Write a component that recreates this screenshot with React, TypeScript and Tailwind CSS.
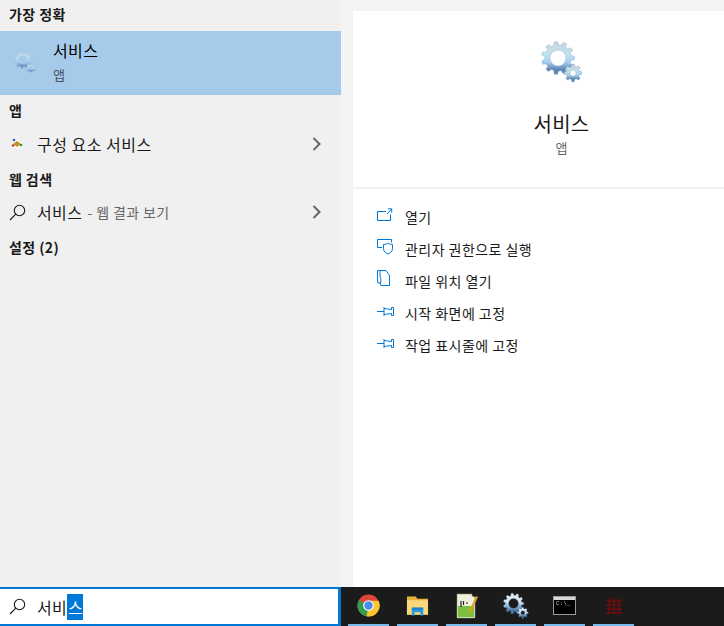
import React from "react";

const FONT = "font-['Noto_Sans_CJK_KR','Noto_Sans',sans-serif]";

function gearPath(cx: number, cy: number, rOuter: number, rInner: number, rHole: number, teeth: number) {
  const pts: string[] = [];
  const step = (Math.PI * 2) / teeth;
  for (let i = 0; i < teeth; i++) {
    const a = i * step;
    const p = (r: number, t: number) => `${(cx + r * Math.cos(a + t * step)).toFixed(2)} ${(cy + r * Math.sin(a + t * step)).toFixed(2)}`;
    pts.push(`${i === 0 ? "M" : "L"}${p(rInner, -0.32)}`, `L${p(rOuter, -0.18)}`, `L${p(rOuter, 0.18)}`, `L${p(rInner, 0.32)}`);
  }
  const hole = `M${cx + rHole} ${cy}A${rHole} ${rHole} 0 1 0 ${cx - rHole} ${cy}A${rHole} ${rHole} 0 1 0 ${cx + rHole} ${cy}Z`;
  return pts.join("") + "Z" + hole;
}

function Gears({ size, id, dark = false, className = "" }: { size: number; id: string; dark?: boolean; className?: string }) {
  return (
    <svg width={size} height={size} viewBox="0 0 42 42" className={`shrink-0 ${className}`}>
      <defs>
        <linearGradient id={id} x1="0" y1="0" x2="0" y2="1">
          <stop offset="0" stopColor={dark ? "#e4edf5" : "#c9d6de"} />
          <stop offset="0.4" stopColor={dark ? "#d2e4f4" : "#bfe2f0"} />
          <stop offset="0.62" stopColor={dark ? "#8fb8e0" : "#a8d0f2"} />
          <stop offset="0.85" stopColor={dark ? "#48709c" : "#5f86b4"} />
        </linearGradient>
      </defs>
      <path d={gearPath(17, 17, 16.5, 13.2, 8, 11)} fill={`url(#${id})`} fillRule="evenodd" stroke="#8ea8bf" strokeWidth="0.4" />
      <path d={gearPath(32, 32, 8.8, 6.6, 3.2, 8)} fill={`url(#${id})`} fillRule="evenodd" stroke="#6b89a8" strokeWidth="0.4" />
    </svg>
  );
}

function SearchIcon({ color = "#1a1a1a" }: { color?: string }) {
  return (
    <svg width="17" height="17" viewBox="0 0 17 17" fill="none" stroke={color} strokeWidth="1.1" className="shrink-0">
      <circle cx="10.5" cy="6.5" r="5.200" />
      <path d="M6.800 10.200 1 16" />
    </svg>
  );
}

function Chevron() {
  return (
    <svg width="9" height="14" viewBox="0 0 9 14" fill="none" stroke="#666" strokeWidth="2" className="shrink-0">
      <path d="M1.500 1 7.500 7l-6 6" />
    </svg>
  );
}

function SectionTitle({ children, className = "" }: { children: React.ReactNode; className?: string }) {
  return <div className={`pl-[9px] text-[14px] font-semibold leading-[18px] tracking-[0.4px] text-[#1a1a1a] ${className}`}>{children}</div>;
}

const blue = "#0078d7";

const OpenIcon = () => (
  <svg width="16" height="14" viewBox="0 0 16 14" fill="none" stroke={blue} strokeWidth="1">
    <path d="M9 3.500H.5v9h13V6.500M10 6l4.500-5M11 .8h3.700v3.700" />
  </svg>
);
const ShieldIcon = () => (
  <svg width="17" height="16" viewBox="0 0 17 16" fill="none" stroke={blue} strokeWidth="1">
    <path d="M5 8.500H.5v-8h14v3" />
    <path d="M6.500 5.500c2 0 3.500-.5 4.500-1.500 1 1 2.500 1.500 4.500 1.500v4c0 3-2 4.500-4.500 5.500-2.500-1-4.500-2.500-4.500-5.500z" />
  </svg>
);
const FolderIcon = () => (
  <svg width="13" height="18" viewBox="0 0 13 18" fill="none" stroke={blue} strokeWidth="1">
    <path d="M.5.500h8.500l3.500 5v10H4l-1-2.500-2.500-.5z" />
    <path d="M3 1v5.500l1 3-.5 4" />
  </svg>
);
const PinIcon = () => (
  <svg width="17" height="11" viewBox="0 0 17 11" fill="none" stroke={blue} strokeWidth="1">
    <path d="M0 5.500h7M7 1v9M7 2.500l7.500 1V1.500h2v8h-2v-2l-7.500 1" />
  </svg>
);

const actions: [React.ReactNode, string][] = [
  [<OpenIcon />, "열기"],
  [<ShieldIcon />, "관리자 권한으로 실행"],
  [<FolderIcon />, "파일 위치 열기"],
  [<PinIcon />, "시작 화면에 고정"],
  [<PinIcon />, "작업 표시줄에 고정"],
];

function TaskItem({ children }: { children: React.ReactNode }) {
  return (
    <div className="relative flex h-full w-[49px] items-center justify-center pb-[2px]">
      <div className="flex items-center justify-center blur-[0.5px]">{children}</div>
      <div className="absolute bottom-0 left-[4px] right-[4px] h-[2px] bg-[#76b9ed]" />
    </div>
  );
}

function Chrome() {
  return (
    <svg width="23" height="23" viewBox="0 0 24 24">
      <circle cx="12" cy="12" r="11.500" fill="#e0453a" />
      <path d="M12 12 2 6.200A11.500 11.500 0 0 0 10 23.300z" fill="#2f9e4f" />
      <path d="M12 12 10 23.300A11.500 11.500 0 0 0 22.500 7H12z" fill="#f9c72f" />
      <circle cx="12" cy="12" r="5.600" fill="#fff" />
      <circle cx="12" cy="12" r="4.400" fill="#4a8cf0" />
    </svg>
  );
}

function Explorer() {
  return (
    <svg width="23" height="22" viewBox="0 0 24 22">
      <path d="M1 1h9l2 2.500h11V20H1z" fill="#e9b43c" />
      <path d="M1 5h22v15H1z" fill="#fbd97a" />
      <path d="M6 14h12v7h-3v-3.500H9V21H6z" fill="#2e9be6" />
      <path d="M6 12.500h12V15H6z" fill="#1f7fc9" />
    </svg>
  );
}

function Notepad() {
  return (
    <svg width="24" height="26" viewBox="0 0 24 26">
      <path d="M2 1h15v2l3 1v21H2z" fill="#eef2dc" stroke="#8a8a6a" strokeWidth="0.6" />
      <path d="M3 13h16v11H3z" fill="#7bc043" />
      <path d="M6 8v6M8.500 8v4M11 10h2" stroke="#222" strokeWidth="1.200" />
      <path d="M14 18 21 3l2 1-7 15-2.500 1.500z" fill="#e8a020" />
    </svg>
  );
}

function Cmd() {
  return (
    <div className="flex h-[19px] w-[23px] flex-col border border-[#9a9a9a] bg-black">
      <div className="h-[3px] bg-[#d8d8d8]" />
      <div className="pl-[2px] font-['Liberation_Mono',monospace] text-[6px] leading-[8px] text-[#d0d0d0]">C:\_</div>
    </div>
  );
}

function RedGrid() {
  return (
    <svg width="16" height="16" viewBox="0 0 16 16" fill="none" stroke="#6d0d0d" strokeWidth="1.500">
      <path d="M0 3h16M0 7h16M0 11h16M0 15h16M3 0v16M8 0v16M13 0v16" />
    </svg>
  );
}

export default function App() {
  return (
    <div className={`flex h-[626px] w-[724px] flex-col overflow-hidden bg-[#f3f3f3] ${FONT}`}>
      <div className="flex min-h-0 flex-1">
        {/* Left results column */}
        <div className="flex w-[341px] shrink-0 flex-col bg-[#f0f0f0]">
          <SectionTitle className="pt-[5px] pb-[8px]">가장 정확</SectionTitle>
          <div className="flex h-[64px] items-center bg-[#a6cbea]">
            <div className="flex w-[53px] items-center justify-center pr-[3px] pb-[3px]">
              <Gears size={22} id="g1" className="opacity-80" />
            </div>
            <div className="flex flex-col pb-[3px]">
              <span className="text-[16px] leading-[22px] tracking-[0.4px] text-black">서비스</span>
              <span className="mt-[5px] text-[13px] leading-[18px] text-[#44525e]">앱</span>
            </div>
          </div>
          <SectionTitle className="pt-[6px]">앱</SectionTitle>
          <div className="mt-[8px] flex h-[34px] items-center pl-[10px] pr-[20px]">
            <svg width="14" height="14" viewBox="0 0 14 14" className="shrink-0">
              <path d="M1 7 7 3l6 4-6 5z" fill="#fff" />
              <path d="M3 7 7 4l4 3-4 3z" fill="#b8941f" />
              <circle cx="4" cy="3" r="1.300" fill="#3a5fa8" />
              <circle cx="11" cy="8" r="1.300" fill="#3c8f3c" />
              <circle cx="3" cy="8.500" r="1.200" fill="#c0392b" />
            </svg>
            <span className="ml-[13px] flex-1 text-[16px] leading-[22px] tracking-[0.5px] text-[#1a1a1a]">구성 요소 서비스</span>
            <Chevron />
          </div>
          <SectionTitle className="pt-[9px]">웹 검색</SectionTitle>
          <div className="mt-[7px] flex h-[34px] items-center pl-[9px] pr-[20px]">
            <SearchIcon />
            <span className="ml-[11px] text-[16px] leading-[22px] tracking-[0.4px] text-[#1a1a1a]">서비스</span>
            <span className="ml-[5px] flex-1 text-[14px] leading-[22px] tracking-[0.4px] text-[#666]">- 웹 결과 보기</span>
            <Chevron />
          </div>
          <SectionTitle className="pt-[9px]">설정 (2)</SectionTitle>
        </div>
        {/* Right preview column */}
        <div className="flex-1 pl-[12px] pt-[11px]">
          <div className="flex h-full flex-col bg-white">
            <div className="flex h-[178px] flex-col items-center border-b-2 border-[#f0f0f0] pl-[46px]">
              <div className="mt-[30px] ml-[1px]">
                <Gears size={42} id="g2" />
              </div>
              <span className="mt-[28px] text-[20px] leading-[26px] tracking-[0.3px] text-[#1a1a1a]">서비스</span>
              <span className="mt-[2px] text-[13px] leading-[18px] text-[#666]">앱</span>
            </div>
            <div className="flex flex-col pt-[12px]">
              {actions.map(([icon, label], i) => (
                <div key={i} className="flex h-[32px] items-center pl-[24px]">
                  <div className="flex w-[28px] items-center pb-[4px]">{icon}</div>
                  <span className="text-[14px] leading-[20px] tracking-[0.45px] text-[#1a1a1a]">{label}</span>
                </div>
              ))}
            </div>
          </div>
        </div>
      </div>
      {/* Bottom bar */}
      <div className="flex h-[39px] shrink-0">
        <div className="flex w-[341px] shrink-0 items-center border-2 border-r-[3px] border-[#0078d7] border-l-0 bg-white pl-[9px]">
          <SearchIcon />
          <span className="ml-[11px] text-[16px] leading-[22px] tracking-[0.4px] text-[#1a1a1a]">서비</span>
          <span className="flex h-[26px] w-[16px] items-center justify-center bg-[#0078d7] text-[16px] leading-[22px] text-white">스</span>
        </div>
        <div className="flex flex-1 items-center bg-[#1b1b1b] pl-[3px]">
          <TaskItem><Chrome /></TaskItem>
          <TaskItem><Explorer /></TaskItem>
          <TaskItem><Notepad /></TaskItem>
          <TaskItem><Gears size={26} id="g3" dark /></TaskItem>
          <TaskItem><Cmd /></TaskItem>
          <TaskItem><RedGrid /></TaskItem>
        </div>
      </div>
    </div>
  );
}
